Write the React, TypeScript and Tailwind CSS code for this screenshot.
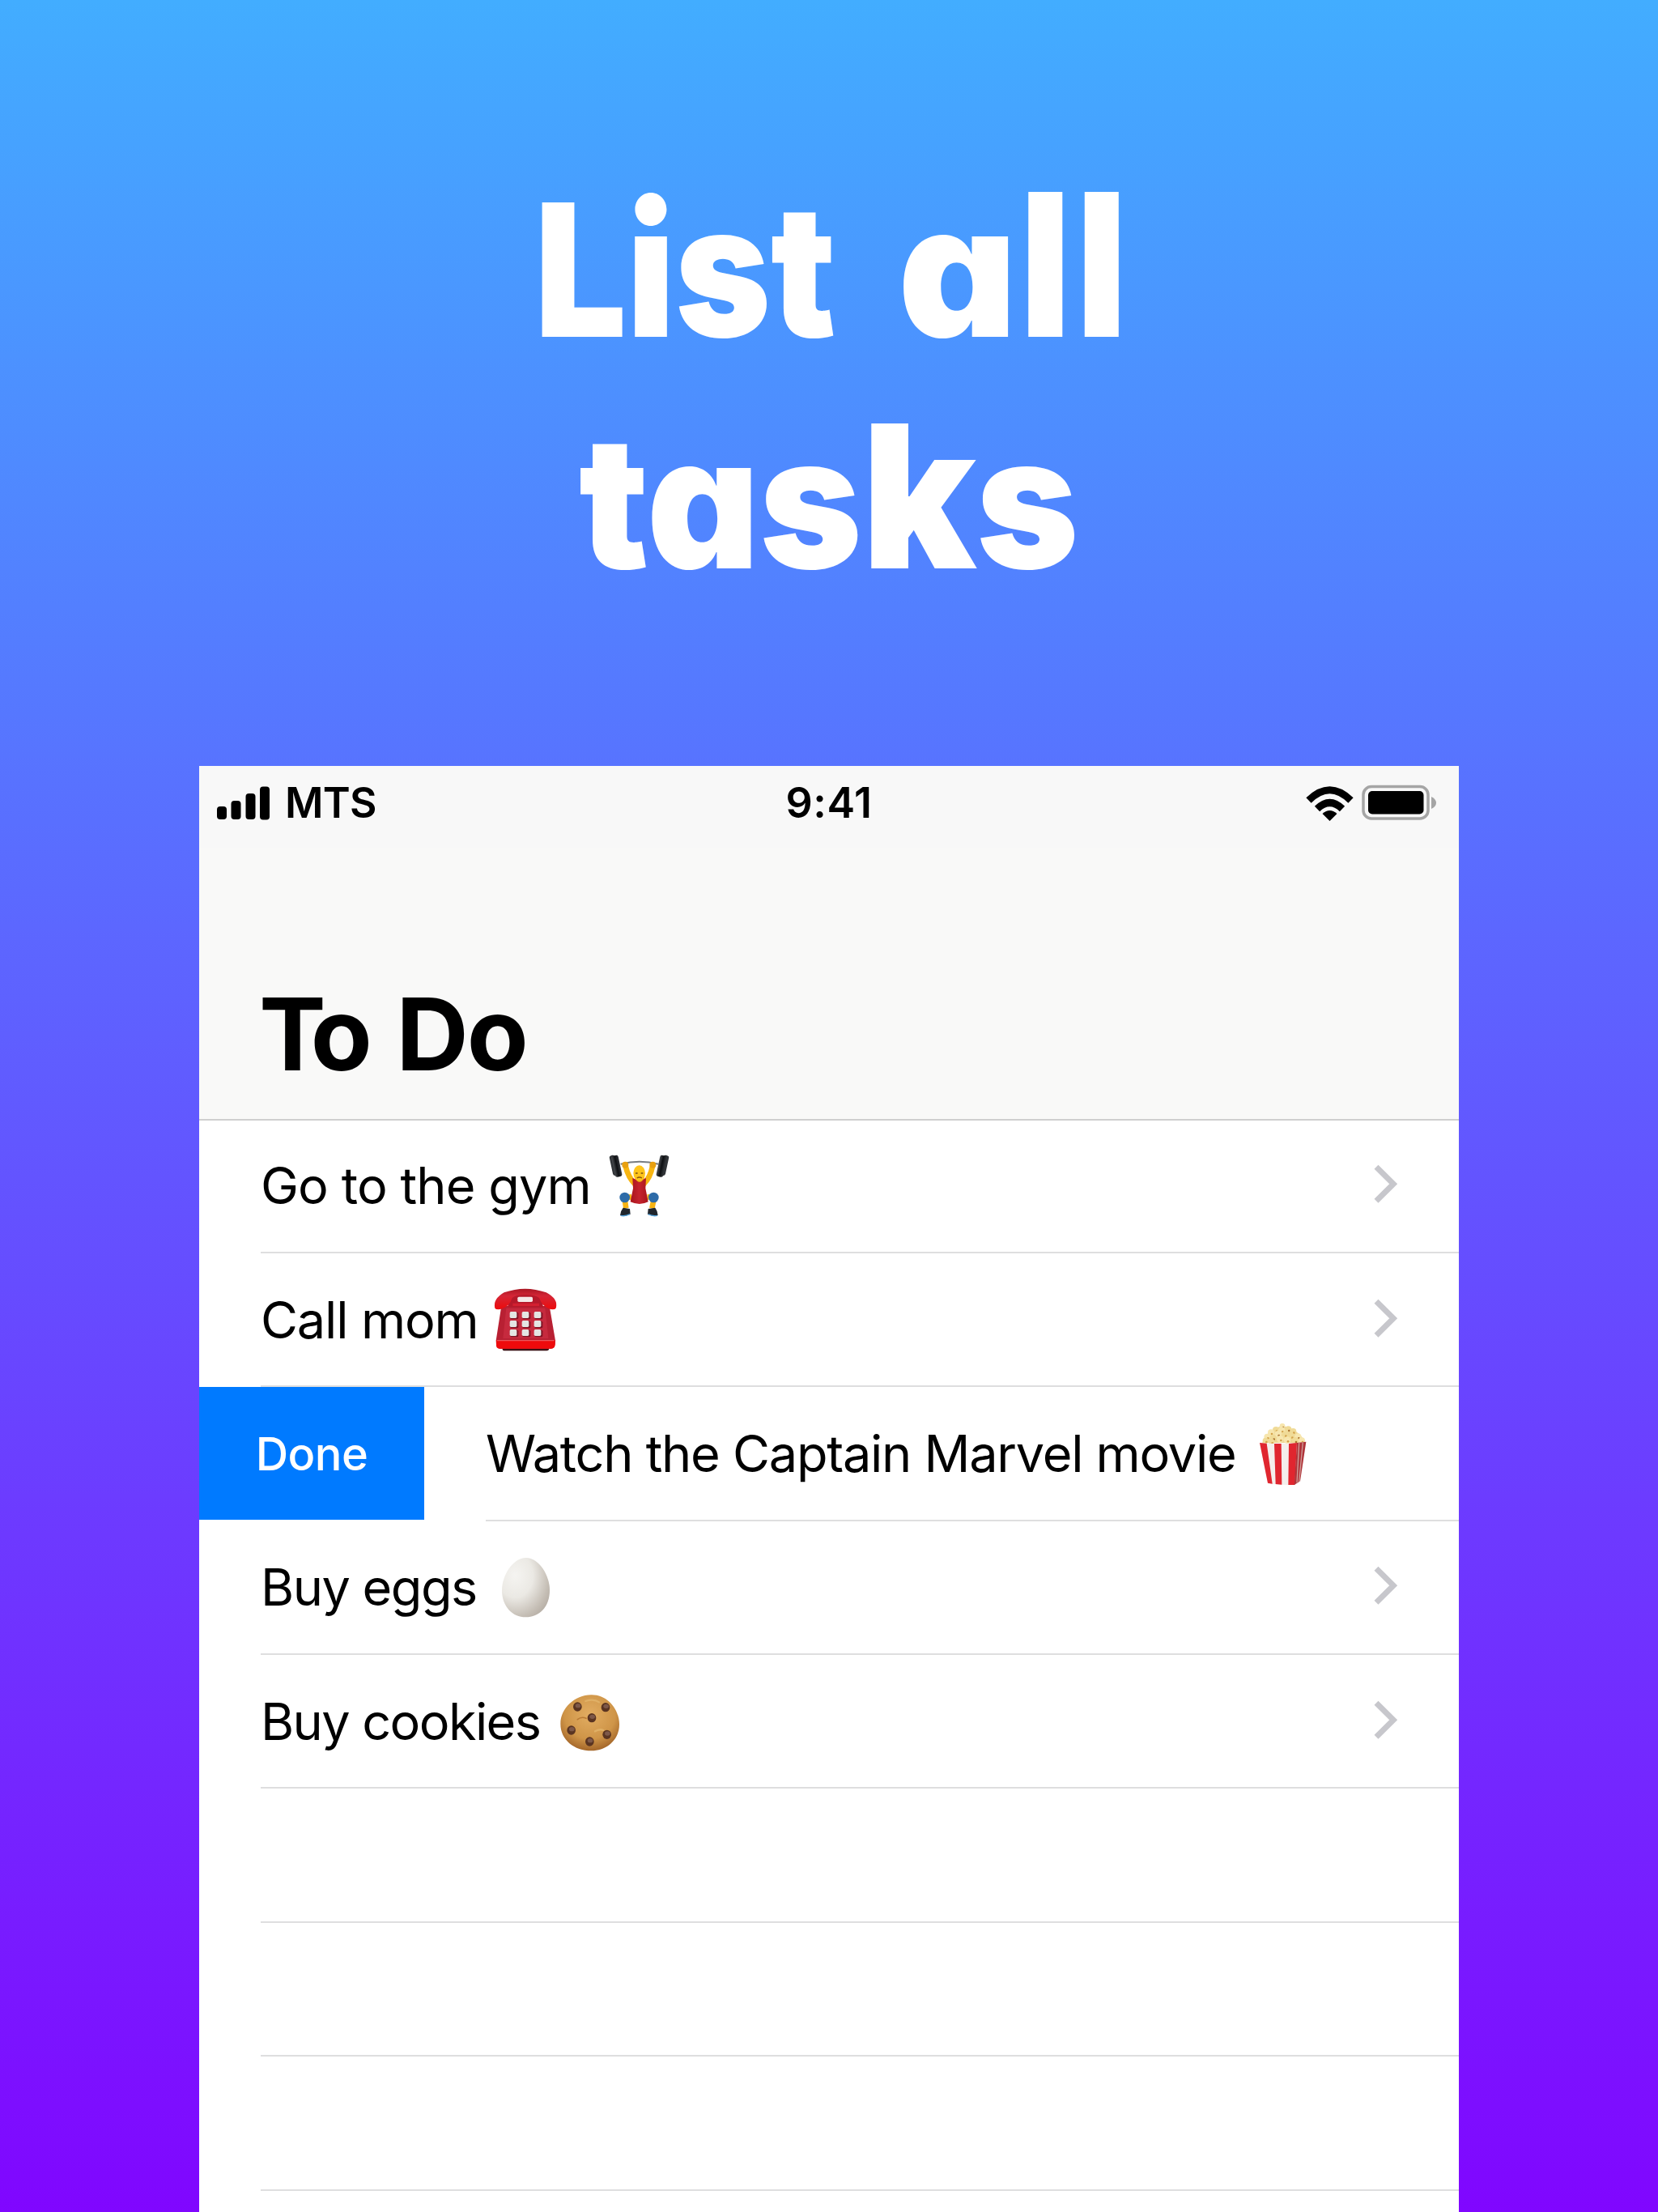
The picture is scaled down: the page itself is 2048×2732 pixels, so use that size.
import React from "react";

function GymEmoji() {
  return (
    <svg viewBox="0 0 360 330" className="w-[120px] h-[110px] shrink-0">
      <defs>
        <linearGradient id="gymPlate" x1="0" x2="1" y1="0" y2="0">
          <stop offset="0" stopColor="#4a4d51" />
          <stop offset="0.5" stopColor="#0d0f12" />
          <stop offset="1" stopColor="#33363a" />
        </linearGradient>
        <linearGradient id="gymVest" x1="0" x2="1" y1="0" y2="0">
          <stop offset="0" stopColor="#a8141c" />
          <stop offset="0.5" stopColor="#c4232e" />
          <stop offset="1" stopColor="#a8141c" />
        </linearGradient>
      </defs>
      <path d="M110 86 Q180 68 250 86" fill="none" stroke="#777c81" strokeWidth="6" />
      <g transform="rotate(-12 95 92)">
        <rect x="75" y="51" width="20" height="76" rx="8" fill="#303337" />
        <rect x="82" y="54" width="26" height="80" rx="8" fill="url(#gymPlate)" />
      </g>
      <g transform="rotate(12 262 92)">
        <rect x="262" y="51" width="20" height="76" rx="8" fill="#303337" />
        <rect x="249" y="54" width="26" height="80" rx="8" fill="url(#gymPlate)" />
      </g>
      <path d="M128 94 Q138 136 164 162 M228 94 Q220 136 194 162" fill="none" stroke="#f7b512" strokeWidth="20" strokeLinecap="round" />
      <circle cx="127" cy="89" r="12" fill="#e8a010" />
      <circle cx="229" cy="89" r="12" fill="#e8a010" />
      <path d="M150 208 L124 210 L130 250 M208 208 L234 210 L226 250" fill="none" stroke="#f6b313" strokeWidth="20" strokeLinejoin="round" />
      <path d="M154 138 Q180 152 204 138 L202 176 L212 226 Q180 242 146 226 L156 176 Z" fill="url(#gymVest)" />
      <path d="M162 138 Q180 168 198 138 L194 126 L166 126 Z" fill="#e9a40f" />
      <ellipse cx="179" cy="120" rx="22" ry="29" fill="#ffc51c" />
      <path d="M165 120 h8 M185 120 h8" stroke="#7a4d12" strokeWidth="5" />
      <path d="M170 138 Q179 132 189 138" stroke="#8a5410" strokeWidth="4" fill="none" />
      <circle cx="125" cy="210" r="19" fill="#2d6ba8" />
      <circle cx="232" cy="210" r="19" fill="#2d6ba8" />
      <path d="M119 248 L144 252 L146 272 Q126 282 108 276 Q108 262 119 248 Z M238 248 L212 252 L210 272 Q230 282 248 276 Q248 262 238 248 Z" fill="#20262d" />
      <path d="M110 277 Q126 281 144 272 M246 277 Q230 281 212 272" fill="none" stroke="#58a7df" strokeWidth="4" />
    </svg>
  );
}

function PhoneEmoji() {
  return (
    <svg viewBox="0 0 360 330" className="w-[120px] h-[110px] shrink-0">
      <defs>
        <linearGradient id="telTop" x1="0" x2="0" y1="0" y2="1">
          <stop offset="0" stopColor="#a91724" />
          <stop offset="0.35" stopColor="#d42636" />
          <stop offset="1" stopColor="#ee0a0c" />
        </linearGradient>
      </defs>
      <path d="M92 264 H264 V274 Q264 280 256 280 H98 Q92 280 92 274 Z" fill="#3b1316" />
      <path d="M88 114 H266 L288 242 Q288 272 272 272 H82 Q68 272 68 242 Z" fill="#b82033" />
      <path d="M106 122 H250 L262 234 H94 Z" fill="#c62a3e" />
      <path d="M69 240 H287 V258 Q286 272 272 272 H82 Q68 272 69 258 Z" fill="#ee0a0c" />
      <path d="M72 242 H284" stroke="#e8575c" strokeWidth="4" />
      <path d="M112 70 H242 V118 H112 Z" fill="#b5192a" />
      <path d="M64 122 Q56 88 98 64 Q176 36 254 64 Q300 88 290 122 Q286 128 270 126 Q240 118 228 84 Q212 72 176 72 Q142 72 128 84 Q118 118 84 126 Q68 128 64 122 Z" fill="url(#telTop)" />
      <rect x="148" y="80" width="56" height="19" rx="5" fill="#f5e9e8" />
      <path d="M130 109 H228" stroke="#d32031" strokeWidth="10" />
      {[133, 178, 223].map((x) =>
        [147, 180, 213].map((y) => (
          <g key={`${x}-${y}`}>
            <rect x={x - 12} y={y - 10} width="30" height="26" rx="5" fill="#7f1425" />
            <rect x={x - 14} y={y - 12} width="26" height="24" rx="5" fill="#e4e5e3" />
          </g>
        )),
      )}
    </svg>
  );
}

const kernels = [
  [192, 64, 10], [168, 78, 12], [190, 80, 13], [214, 76, 12], [150, 88, 12], [232, 84, 12], [176, 94, 13],
  [202, 96, 13], [136, 104, 12], [158, 108, 13], [184, 112, 13], [226, 102, 13], [250, 104, 13], [130, 118, 11],
  [210, 116, 13], [240, 118, 13], [264, 118, 12], [152, 122, 11],
];

function PopcornEmoji() {
  return (
    <svg viewBox="0 0 360 330" className="w-[120px] h-[110px] shrink-0">
      <path d="M118 126 Q130 82 192 62 Q256 78 278 126 Z" fill="#edd694" />
      {kernels.map(([x, y, r], i) => (
        <g key={i}>
          <circle cx={x} cy={y} r={r} fill={i % 2 ? "#f0db97" : "#f7e6ae"} />
          <circle cx={x + 3} cy={y + 5} r="4" fill={i % 3 ? "#d3a24a" : "#a9702c"} />
        </g>
      ))}
      <path d="M108 126 Q180 132 246 126 L280 122 L258 268 L236 282 Q180 282 138 276 Z" fill="#f4efec" />
      <path d="M108 126 L134 128 L155 278 L138 275 Z M162 129 L188 129 L190 281 L167 279 Z M216 129 L246 126 L238 282 L214 282 Z" fill="#e0262f" />
      <path d="M246 126 L280 122 L258 268 L236 282 Z" fill="#b0343a" />
      <path d="M254 125 L246 274 M268 124 L254 270" stroke="#cf9d98" strokeWidth="4" />
    </svg>
  );
}

function EggEmoji() {
  return (
    <svg viewBox="-30 15 360 330" className="w-[120px] h-[110px] shrink-0">
      <defs>
        <radialGradient id="eggShade" cx="0.28" cy="0.3" r="0.82">
          <stop offset="0" stopColor="#f5f4f1" />
          <stop offset="0.45" stopColor="#ebe9e4" />
          <stop offset="0.85" stopColor="#c5beb5" />
          <stop offset="1" stopColor="#b8b0a7" />
        </radialGradient>
      </defs>
      <path d="M149 72 C198 72 237 138 237 192 C237 254 198 292 148 292 C98 292 60 252 60 192 C60 138 100 72 149 72 Z" fill="url(#eggShade)" />
    </svg>
  );
}

const chips = [
  [340, 621], [444, 623], [393, 662], [317, 708], [449, 724], [385, 750],
];

function CookieEmoji() {
  return (
    <svg viewBox="195 510 360 330" className="w-[120px] h-[110px] shrink-0">
      <defs>
        <radialGradient id="cookieShade" cx="0.5" cy="0.36" r="0.66">
          <stop offset="0" stopColor="#e2ad62" />
          <stop offset="0.65" stopColor="#cf9548" />
          <stop offset="1" stopColor="#a06227" />
        </radialGradient>
      </defs>
      <path d="M390 577 C450 575 495 630 495 686 C495 742 450 784 392 784 C328 784 277 744 277 684 C277 626 330 578 390 577 Z" fill="url(#cookieShade)" />
      <path d="M340 668 Q355 656 372 664" fill="none" stroke="#b87a35" strokeWidth="5" strokeLinecap="round" />
      <path d="M370 600 Q400 590 420 604 M405 712 Q422 702 436 708" fill="none" stroke="#e0b066" strokeWidth="7" strokeLinecap="round" />
      {chips.map(([x, y]) => (
        <g key={x}>
          <ellipse cx={x} cy={y} rx="16" ry="17" fill="#5a3421" />
          <ellipse cx={x + 2} cy={y - 4} rx="10" ry="8" fill="#7d5849" />
        </g>
      ))}
    </svg>
  );
}

function Chevron() {
  return (
    <svg viewBox="0 0 32 52" className="ml-auto mr-[75px] h-[52px] w-[32px] shrink-0">
      <path d="M5 3.300 L26.200 24.300 L5 45.300" fill="none" stroke="#c7c7cc" strokeWidth="7" />
    </svg>
  );
}

const label = "whitespace-nowrap pt-px text-[63px] leading-none font-[430] text-black";

function Row({ text, width, spacing, children }: { text: string; width: string; spacing: string; children?: React.ReactNode }) {
  return (
    <div className="flex h-[165.4px] items-stretch">
      <div className="ml-[76px] flex flex-1 items-center border-b-2 border-[#dededf]">
        {text && (
          <>
            <span className={`${label} ${width} ${spacing}`}>{text}</span>
            {children}
            <Chevron />
          </>
        )}
      </div>
    </div>
  );
}

export default function App() {
  return (
    <div className="flex h-[2732px] w-[2048px] flex-col items-center overflow-hidden bg-linear-to-b/srgb from-[#42adff] to-[#8006ff] font-['Inter','Liberation_Sans',sans-serif]">
      <h1 className="flex h-[946px] shrink-0 flex-col items-center pt-[190px] text-[228px] leading-[286px] font-black text-white [font-feature-settings:'cv11']">
        <span className="h-[286px] pr-[41px] whitespace-nowrap">
          <span className="mr-[31px] inline-block origin-right scale-x-[0.883]">List</span> a
          <span className="text-[246px] leading-none font-[760]">ll</span>
        </span>
        <span className="h-[286px] scale-x-[0.945] whitespace-nowrap">
          tas<span className="text-[246px] leading-none font-[860]">k</span>s
        </span>
      </h1>

      <main className="flex w-[1556px] flex-1 flex-col overflow-hidden bg-white">
        <header className="flex h-[438px] shrink-0 flex-col border-b-2 border-[#cfcfcf] bg-[#f9f9f8]">
          <div className="grid h-[101px] grid-cols-3 items-start bg-[#f8f8f8] pt-[12px]">
            <div className="flex items-center pl-[22px]">
              <svg viewBox="0 0 66 66" className="h-[66px] w-[66px]">
                <rect x="0" y="38" width="12" height="16" rx="4" />
                <rect x="17.5" y="31" width="12" height="23" rx="4" />
                <rect x="35.5" y="22" width="12" height="32" rx="4" />
                <rect x="53" y="13.500" width="12" height="41" rx="4" />
              </svg>
              <span className="ml-[18px] text-[51.5px] leading-[66px] font-[580] tracking-[-0.8px]">MTS</span>
            </div>
            <div className="pt-px text-center text-[52px] leading-[66px] font-semibold tracking-[0.6px]">9:41</div>
            <div className="flex justify-end pr-[27px]">
              <svg viewBox="0 0 166 66" className="h-[66px] w-[166px]">
                <g fill="none" stroke="#000" strokeWidth="9">
                  <path d="M7.500 30.500 Q33.500 5 59.500 30.500" />
                  <path d="M18 41 Q33.500 26 49 41" />
                </g>
                <path d="M24.500 47 Q33.500 39 42.500 47 L33.500 56 Z" />
                <rect x="75" y="13.500" width="80" height="39.500" rx="10" fill="none" stroke="#a5a5a5" strokeWidth="3.500" />
                <rect x="81" y="19" width="68.500" height="28.500" rx="5" />
                <path d="M159 26 Q165 29 165 33.500 Q165 38 159 41 Z" fill="#a5a5a5" />
              </svg>
            </div>
          </div>
          <h2 className="mt-auto pb-[43px] pl-[74px] text-[124px] leading-none font-bold">
            <span className="tracking-[-19px]">T</span>o <span className="tracking-[-2px]">D</span>o
          </h2>
        </header>

        <div className="-mt-[1.500px] flex flex-col">
          <Row text="Go to the gym" width="w-[408px]" spacing="tracking-[-0.9px]">
            <GymEmoji />
          </Row>
          <Row text="Call mom" width="w-[268px]" spacing="tracking-[-1.15px]">
            <PhoneEmoji />
          </Row>
          <div className="flex h-[165.4px]">
            <button className="flex h-[164px] w-[278px] items-center justify-center bg-[#007aff] pt-[2px] text-[56px] leading-none font-[450] tracking-[-0.6px] text-white">Done</button>
            <div className="ml-[76px] flex flex-1 items-center border-b-2 border-[#dededf]">
              <span className={`${label} w-[920px] tracking-[-1.25px]`}>Watch the Captain Marvel movie</span>
              <PopcornEmoji />
            </div>
          </div>
          <Row text="Buy eggs" width="w-[268px]" spacing="tracking-[-1.5px]">
            <EggEmoji />
          </Row>
          <Row text="Buy cookies" width="w-[343px]" spacing="tracking-[-1.6px]">
            <CookieEmoji />
          </Row>
          <Row text="" width="" spacing="" />
          <Row text="" width="" spacing="" />
          <Row text="" width="" spacing="" />
        </div>
      </main>
    </div>
  );
}
